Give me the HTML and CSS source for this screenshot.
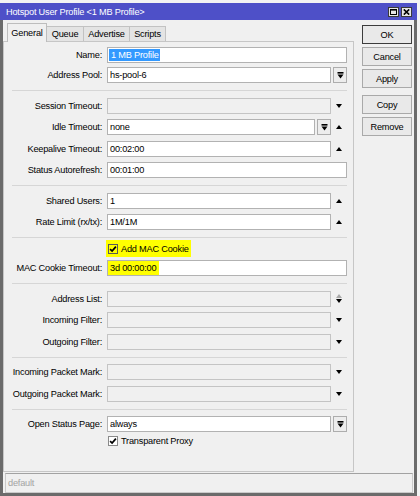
FILE: index.html
```html
<!DOCTYPE html>
<html lang="en">
<head>
    <meta charset="UTF-8">
    <title>Hotspot User Profile</title>
    <link rel="stylesheet" href="styles.css">
</head>
<body>

<div class="window">
    <div class="titlebar">
        <span class="title">Hotspot User Profile &lt;1 MB Profile&gt;</span>
        <div class="title-buttons">
            <span class="tbtn"><svg width="7" height="6" viewBox="0 0 7 6"><rect x="0.5" y="0.5" width="6" height="5" fill="none" stroke="#000"/><rect x="0" y="0" width="7" height="1.6" fill="#000"/></svg></span>
            <span class="tbtn"><svg width="7" height="6" viewBox="0 0 7 6"><path d="M0.8 0.4 L6.2 5.6 M6.2 0.4 L0.8 5.6" stroke="#000" stroke-width="1.6"/></svg></span>
        </div>
    </div>

    <div class="frame">
        <div class="main">
            <div class="left">
                <div class="tabs">
                    <span class="tab active">General</span>
                    <span class="tab queue">Queue</span>
                    <span class="tab advertise">Advertise</span>
                    <span class="tab scripts">Scripts</span>
                </div>
                <div class="panel">
                    <div class="group g1">
                        <div class="row"><label>Name:</label><div class="field"><span class="input name"><span class="sel">1 MB Profile</span></span></div></div>
                        <div class="row"><label>Address Pool:</label><div class="field"><span class="input">hs-pool-6</span><span class="drop"><svg width="7" height="7" viewBox="0 0 7 7"><rect x="0.5" y="0" width="6" height="1.6"/><path d="M0.5 2.6 L6.5 2.6 L3.5 6.4 Z"/></svg></span></div></div>
                    </div>
                    <div class="sep"></div>
                    <div class="group">
                        <div class="row"><label>Session Timeout:</label><div class="field"><span class="input disabled"></span><span class="side"><i class="down"></i></span></div></div>
                        <div class="row"><label>Idle Timeout:</label><div class="field"><span class="input">none</span><span class="drop"><svg width="7" height="7" viewBox="0 0 7 7"><rect x="0.5" y="0" width="6" height="1.6"/><path d="M0.5 2.6 L6.5 2.6 L3.5 6.4 Z"/></svg></span><span class="side"><i class="up"></i></span></div></div>
                        <div class="row"><label>Keepalive Timeout:</label><div class="field"><span class="input">00:02:00</span><span class="side"><i class="up"></i></span></div></div>
                        <div class="row"><label>Status Autorefresh:</label><div class="field"><span class="input">00:01:00</span></div></div>
                    </div>
                    <div class="sep"></div>
                    <div class="group">
                        <div class="row"><label>Shared Users:</label><div class="field"><span class="input">1</span><span class="side"><i class="up"></i></span></div></div>
                        <div class="row"><label>Rate Limit (rx/tx):</label><div class="field"><span class="input">1M/1M</span><span class="side"><i class="up"></i></span></div></div>
                    </div>
                    <div class="sep close"></div>
                    <div class="group cookie">
                        <div class="check-row marked">
                            <span class="marker"><span class="cb"><svg width="8" height="8" viewBox="0 0 8 8"><path d="M1.1 4.1 L3.1 6.1 L6.9 1.6" fill="none" stroke="#000" stroke-width="1.7"/></svg></span>Add MAC Cookie</span>
                        </div>
                        <div class="row"><label>MAC Cookie Timeout:</label><div class="field"><span class="input mac"><span class="hl">3d 00:00:00</span></span></div></div>
                    </div>
                    <div class="sep"></div>
                    <div class="group">
                        <div class="row"><label>Address List:</label><div class="field"><span class="input disabled"></span><span class="side"><i class="up grey"></i><i class="down"></i></span></div></div>
                        <div class="row"><label>Incoming Filter:</label><div class="field"><span class="input disabled"></span><span class="side"><i class="down"></i></span></div></div>
                        <div class="row"><label>Outgoing Filter:</label><div class="field"><span class="input disabled"></span><span class="side"><i class="down"></i></span></div></div>
                    </div>
                    <div class="sep"></div>
                    <div class="group">
                        <div class="row"><label>Incoming Packet Mark:</label><div class="field"><span class="input disabled"></span><span class="side"><i class="down"></i></span></div></div>
                        <div class="row"><label>Outgoing Packet Mark:</label><div class="field"><span class="input disabled"></span><span class="side"><i class="down"></i></span></div></div>
                    </div>
                    <div class="sep"></div>
                    <div class="group last">
                        <div class="row"><label>Open Status Page:</label><div class="field"><span class="input">always</span><span class="drop"><svg width="7" height="7" viewBox="0 0 7 7"><rect x="0.5" y="0" width="6" height="1.6"/><path d="M0.5 2.6 L6.5 2.6 L3.5 6.4 Z"/></svg></span></div></div>
                        <div class="check-row">
                            <span class="cb white"><svg width="8" height="8" viewBox="0 0 8 8"><path d="M1.1 4.1 L3.1 6.1 L6.9 1.6" fill="none" stroke="#000" stroke-width="1.7"/></svg></span>Transparent Proxy
                        </div>
                    </div>
                </div>
            </div>

            <div class="buttons">
                <span class="btn default">OK</span>
                <span class="btn">Cancel</span>
                <span class="btn">Apply</span>
                <span class="btn spaced">Copy</span>
                <span class="btn">Remove</span>
            </div>
        </div>

        <div class="statusbar">default</div>
    </div>
</div>

</body>
</html>
```

FILE: styles.css
```css
* {
    box-sizing: border-box;
}
body {
    margin: 0;
    background: #f3f3f3;
    font-family: "Liberation Sans", Arial, sans-serif;
    font-size: 9.2px;
    letter-spacing: -0.2px;
    color: #000;
}
.window {
    width: 417px;
    margin-top: 3px;
}
.titlebar {
    height: 17px;
    background: #4e50c8;
    display: flex;
    align-items: center;
    justify-content: space-between;
    padding: 0 5px 0 6px;
}
.title {
    color: #fff;
}
.title-buttons {
    display: flex;
    gap: 2px;
    margin-top: 1px;
}
.tbtn {
    width: 11px;
    height: 10px;
    background: #e6e6e6;
    border: 1px solid #3a3a3a;
    display: flex;
    align-items: center;
    justify-content: center;
}
.frame {
    height: 476px;
    border: 3px solid #6b6b6b;
    border-top: none;
    background: #f0f0f0;
}
.main {
    display: flex;
}
.left {
    width: 351px;
    padding-top: 3px;
}

/* tabs */
.tabs {
    display: flex;
    align-items: flex-end;
    height: 19px;
    margin: 0 0 -1px 4px;
    position: relative;
    z-index: 1;
}
.tab {
    height: 15px;
    margin-bottom: 1px;
    border: 1px solid #c2c2c2;
    border-bottom: none;
    background: #e4e4e4;
    display: flex;
    align-items: center;
    justify-content: center;
}
.tab.active {
    width: 40px;
    height: 19px;
    margin-bottom: 0;
    background: #f0f0f0;
    border-color: #bdbdbd;
}
.tab.queue { width: 37px; border-left: none; }
.tab.advertise { width: 46px; border-left: none; }
.tab.scripts { width: 36px; border-left: none; }

.panel {
    height: 431px;
    border: 1px solid #c6c6c6;
    background: #f0f0f0;
    padding-top: 5px;
}

/* form rows */
.row {
    display: flex;
    align-items: center;
    height: 16px;
}
.group .row + .row {
    margin-top: 5.5px;
}
.group.g1 .row + .row {
    margin-top: 4px;
}
.row label {
    width: 98px;
    flex: none;
    text-align: right;
    white-space: nowrap;
}
.field {
    display: flex;
    align-items: center;
    width: 240px;
    height: 16px;
    margin-left: 5px;
}
.input {
    flex: 1;
    height: 16px;
    border: 1px solid #b2b2b2;
    background: #fff;
    display: flex;
    align-items: center;
    padding-left: 2px;
    white-space: nowrap;
    overflow: hidden;
}
.input.disabled {
    background: #f0f0f0;
    border-color: #c4c4c4;
}
.input.name {
    padding-left: 1px;
}
.sel {
    background: #3399ff;
    color: #fff;
    height: 12px;
    line-height: 12px;
    padding: 0 1px 0 2px;
}
.input.mac {
    padding-left: 0;
}
.hl {
    background: #ffff00;
    height: 100%;
    display: flex;
    align-items: center;
    padding: 0 3px 0 2px;
}
.drop {
    width: 14px;
    height: 16px;
    flex: none;
    margin-left: 2px;
    border: 1px solid #adadad;
    background: #ededed;
    display: flex;
    align-items: center;
    justify-content: center;
}
.side {
    width: 16px;
    height: 16px;
    flex: none;
    display: flex;
    flex-direction: column;
    align-items: center;
    justify-content: center;
    gap: 1px;
}
.up, .down {
    width: 0;
    height: 0;
    border-left: 3.5px solid transparent;
    border-right: 3.5px solid transparent;
}
.up {
    border-bottom: 4px solid #000;
}
.up.grey {
    border-bottom-color: #a8a8a8;
}
.down {
    border-top: 4px solid #000;
}

.sep {
    width: 335px;
    height: 1px;
    background: #d6d6d6;
    margin: 7px 0 6.5px 8px;
}
.sep.close {
    margin-bottom: 2px;
}

/* checkboxes */
.check-row {
    display: flex;
    align-items: center;
    height: 16px;
    padding-left: 104px;
}
.check-row.marked {
    height: 17px;
    padding-left: 102px;
}
.group.cookie .row {
    margin-top: 3px;
}
.group.last .check-row {
    margin-top: 1px;
}
.marker {
    display: flex;
    align-items: center;
    height: 17px;
    padding: 0 2px;
    background: #ffff00;
}
.cb {
    width: 10px;
    height: 10px;
    border: 1px solid #5a5a5a;
    margin-right: 3px;
    display: flex;
    align-items: center;
    justify-content: center;
}
.cb.white {
    background: #fff;
    border-color: #8a8a8a;
}

/* buttons */
.buttons {
    width: 50px;
    margin-left: 8px;
    padding-top: 5px;
    display: flex;
    flex-direction: column;
    gap: 3px;
}
.btn {
    height: 19px;
    border: 1px solid #a9a9a9;
    background: #e9e9e9;
    display: flex;
    align-items: center;
    justify-content: center;
}
.btn.default {
    border-color: #3c3c3c;
}
.btn.spaced {
    margin-top: 4px;
}

.statusbar {
    height: 20px;
    margin: 1px 1px 0 2px;
    border: 1px solid #cacaca;
    border-top-color: #a2a2a2;
    display: flex;
    align-items: center;
    padding-left: 2px;
    color: #a3a3a3;
}
```
